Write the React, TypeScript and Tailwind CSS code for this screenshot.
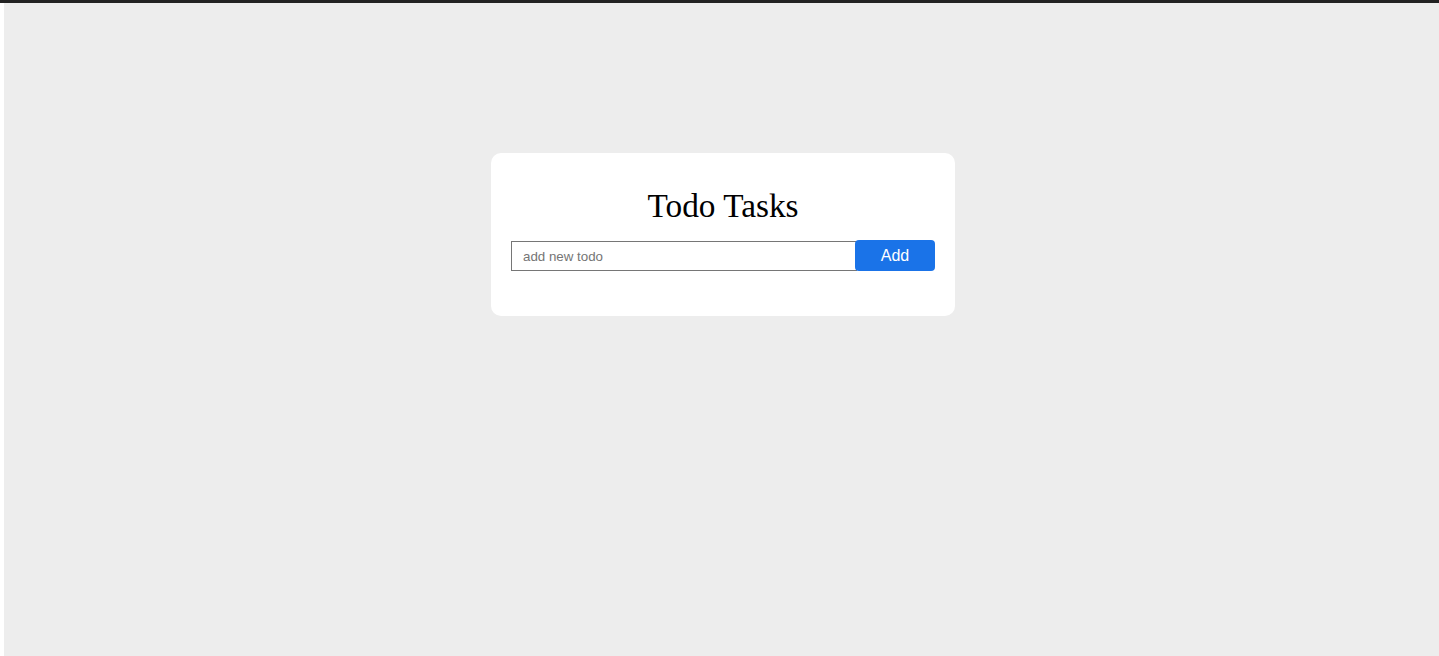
import * as React from 'react';
import { useState } from 'react';

const App: React.FC = () => {
  const [todo, setTodo] = useState('');

  return (
    <div className="min-h-screen w-full flex flex-col bg-white" style={{ fontFamily: '"Liberation Sans", Arial, sans-serif' }}>
      <div className="h-[3px] w-full bg-[#222222] shrink-0" />
      <div className="flex flex-1 pl-[4px]">
        <div className="flex-1 bg-[#ededed] flex justify-center items-start pl-[3px] pt-[150px] min-h-[653px]">
          <div className="w-[464px] bg-white rounded-[10px] px-[20px] pt-[35px] pb-[45px] flex flex-col">
            <h1 className="text-[33.3px] leading-[35px] text-black text-center m-0 font-normal" style={{ fontFamily: '"Liberation Serif", "Times New Roman", serif' }}>
              Todo Tasks
            </h1>
            <form className="flex items-center mt-[17px]" onSubmit={(e) => e.preventDefault()}>
              <input
                type="text"
                value={todo}
                onChange={(e) => setTodo(e.target.value)}
                placeholder="add new todo"
                className="flex-1 min-w-0 h-[30px] border border-[#767676] px-[11px] pt-[1px] text-[13.33px] text-black placeholder:text-[#757575] outline-none bg-white"
              />
              <button
                type="submit"
                className="relative w-[80px] h-[31px] -ml-[2px] bg-[#1a73e8] text-white text-[16px] rounded-[4px]"
              >
                Add
              </button>
            </form>
          </div>
        </div>
      </div>
    </div>
  );
};

export default App;
